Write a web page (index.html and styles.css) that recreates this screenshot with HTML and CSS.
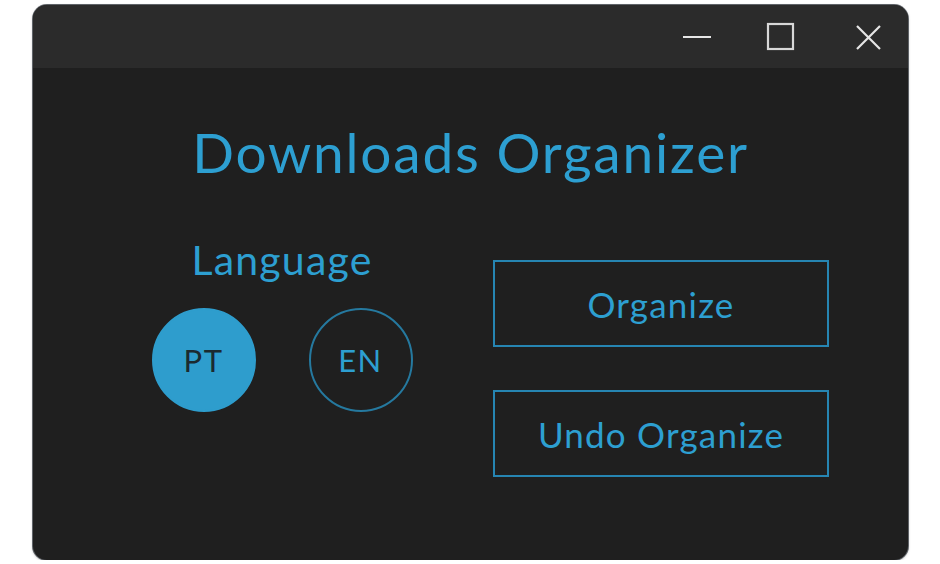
FILE: index.html
```html
<!DOCTYPE html>
<html>
<head>
<meta charset="utf-8">
<link rel="stylesheet" href="styles.css">
</head>
<body>
<div class="window">
  <div class="titlebar">
    <span class="ctl ctl-min">
      <svg width="30" height="30" viewBox="0 0 30 30"><line x1="1" y1="15" x2="29" y2="15" stroke="#e6e6e6" stroke-width="2.2"/></svg>
    </span>
    <span class="ctl ctl-max">
      <svg width="30" height="30" viewBox="0 0 30 30"><rect x="2" y="2" width="25" height="25" fill="none" stroke="#d8d8d8" stroke-width="2.2"/></svg>
    </span>
    <span class="ctl ctl-close">
      <svg width="30" height="30" viewBox="0 0 30 30"><path d="M4 4 L27 27 M27 4 L4 27" stroke="#e6e6e6" stroke-width="2.2"/></svg>
    </span>
  </div>
  <div class="content">
    <h1 class="title">Downloads Organizer</h1>
    <div class="row">
      <div class="lang">
        <div class="lang-label">Language</div>
        <div class="circles">
          <div class="circle active">PT</div>
          <div class="circle">EN</div>
        </div>
      </div>
      <div class="actions">
        <div class="btn">Organize</div>
        <div class="btn">Undo Organize</div>
      </div>
    </div>
  </div>
</div>
</body>
</html>
```
FILE: styles.css
```css
html, body {
  margin: 0;
  padding: 0;
  background: #ffffff;
  font-family: Lato, "Open Sans", sans-serif;
}
body {
  padding: 5px 0 0 33px;
}
.window {
  width: 875px;
  height: 555px;
  border-radius: 14px;
  background: #1f1f1f;
  overflow: hidden;
  box-shadow: 0 0 0 1px #5f6368, 0 1px 3px rgba(0,0,0,0.35);
  display: flex;
  flex-direction: column;
}
.titlebar {
  height: 63px;
  background: #2b2b2b;
  display: flex;
  justify-content: flex-end;
  align-items: center;
  padding-right: 25px;
}
.ctl {
  display: flex;
  width: 30px;
  height: 30px;
}
.ctl-max { margin-left: 54px; }
.ctl-close { margin-left: 57px; }
.content {
  flex: 1;
  display: flex;
  flex-direction: column;
  align-items: center;
}
.title {
  margin: 53px 0 0 0;
  font-weight: 400;
  font-size: 55px;
  line-height: 62px;
  color: #2d9fd1;
  letter-spacing: 1.8px;
}
.row {
  display: flex;
  width: 100%;
  box-sizing: border-box;
  padding: 0 79px 0 118px;
  gap: 80px;
  margin-top: 53px;
}
.lang {
  width: 262px;
  display: flex;
  flex-direction: column;
  align-items: center;
}
.lang-label {
  font-size: 41px;
  line-height: 48px;
  color: #2d9fd1;
  letter-spacing: 1.2px;
}
.circles {
  display: flex;
  gap: 53px;
  margin-top: 24px;
}
.circle {
  width: 104px;
  height: 104px;
  box-sizing: border-box;
  border-radius: 50%;
  border: 2px solid #25799f;
  display: flex;
  align-items: center;
  justify-content: center;
  font-size: 31px;
  color: #2d9fd1;
  letter-spacing: 1.5px;
}
.circle.active {
  background: #2e9dcd;
  border-color: #2e9dcd;
  color: #1b2a30;
}
.actions {
  flex: 1;
  display: flex;
  flex-direction: column;
  gap: 43px;
  padding-top: 24px;
}
.btn {
  height: 87px;
  box-sizing: border-box;
  border: 2px solid #2685b2;
  display: flex;
  align-items: center;
  justify-content: center;
  font-size: 35px;
  color: #2d9fd1;
  letter-spacing: 1.2px;
}
```
